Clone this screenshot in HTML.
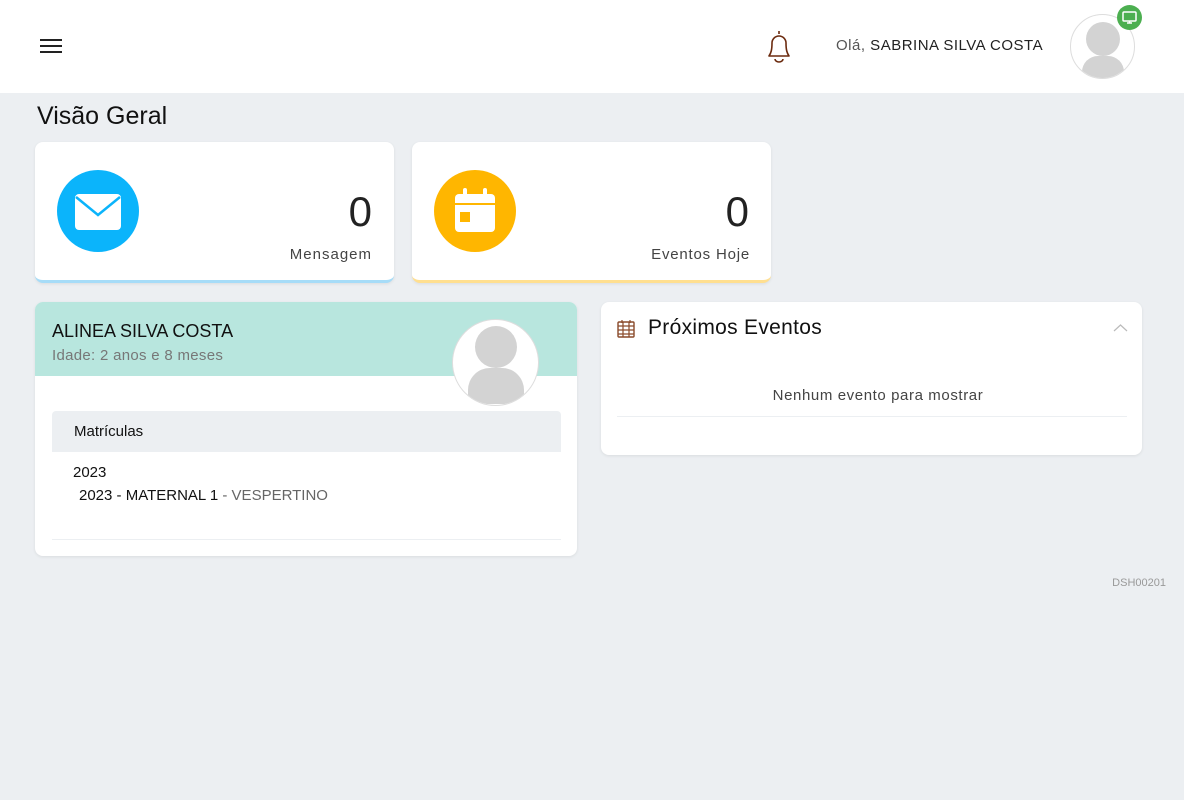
<!DOCTYPE html>
<html><head><meta charset="utf-8"><style>
*{margin:0;padding:0;box-sizing:border-box}
body{width:1184px;height:800px;background:#eceff2;font-family:"Liberation Sans",sans-serif;color:#111;position:relative;overflow:hidden}
.a{position:absolute}
.card{position:absolute;background:#fff;border-radius:8px;box-shadow:0 1px 3px rgba(0,0,0,.08)}
</style></head><body>
<div class="a" style="left:0;top:0;width:1184px;height:93px;background:#fff"></div>
<div class="a" style="left:40px;top:39px;width:22px;height:2px;background:#222"></div>
<div class="a" style="left:40px;top:45px;width:22px;height:2px;background:#222"></div>
<div class="a" style="left:40px;top:51px;width:22px;height:2px;background:#222"></div>
<svg class="a" style="left:764px;top:29px" width="30" height="36" viewBox="0 0 30 36"><path d="M15 2v3M5 27c2-3 3-6 3-13a7 7 0 0 1 14 0c0 7 1 10 3 13z M11 30a4 3 0 0 0 8 0" fill="none" stroke="#6b2a0e" stroke-width="1.6" stroke-linejoin="round"/></svg>
<div class="a" style="left:836px;top:37px;font-size:15px;color:#222;letter-spacing:0.5px"><span style="color:#555">Olá,</span> SABRINA SILVA COSTA</div>
<div class="a" style="left:1070px;top:14px;width:65px;height:65px;border-radius:50%;border:1px solid #ddd;background:#fff;overflow:hidden">
<div class="a" style="left:15px;top:7px;width:34px;height:34px;border-radius:50%;background:#d3d3d3"></div>
<div class="a" style="left:11px;top:41px;width:42px;height:30px;border-radius:16px 16px 6px 6px;background:#d3d3d3"></div></div>
<div class="a" style="left:1117px;top:5px;width:25px;height:25px;border-radius:50%;background:#4caf50"></div>
<svg class="a" style="left:1121px;top:9px" width="17" height="17" viewBox="0 0 17 17"><rect x="2" y="3" width="13" height="9" rx="1" fill="none" stroke="#fff" stroke-width="1.5"/><path d="M6 14h5M8.5 12v2" stroke="#fff" stroke-width="1.5"/></svg>
<div class="a" style="left:37px;top:102px;font-size:25px;color:#111">Visão Geral</div>

<div class="card" style="left:35px;top:142px;width:359px;height:141px;border-bottom:3px solid #a6dcf8"></div>
<div class="a" style="left:57px;top:170px;width:82px;height:82px;border-radius:50%;background:#0bb4fb"></div>
<svg class="a" style="left:74px;top:193px" width="48" height="38" viewBox="0 0 48 38"><rect x="1" y="1" width="46" height="36" rx="4" fill="#fff"/><path d="M2 4l22 18 22-18" fill="none" stroke="#0bb4fb" stroke-width="2.5"/></svg>
<div class="a" style="left:300px;top:188px;width:72px;text-align:right;font-size:42px;color:#222">0</div>
<div class="a" style="left:230px;top:246px;width:142px;text-align:right;font-size:15px;color:#444;letter-spacing:1px">Mensagem</div>

<div class="card" style="left:412px;top:142px;width:359px;height:141px;border-bottom:3px solid #ffdf90"></div>
<div class="a" style="left:434px;top:170px;width:82px;height:82px;border-radius:50%;background:#ffb600"></div>
<svg class="a" style="left:454px;top:188px" width="42" height="48" viewBox="0 0 42 48"><rect x="1" y="6" width="40" height="38" rx="4" fill="#fff"/><rect x="9" y="0" width="4" height="9" rx="2" fill="#fff"/><rect x="29" y="0" width="4" height="9" rx="2" fill="#fff"/><path d="M1 16h40" stroke="#ffb600" stroke-width="2"/><rect x="6" y="24" width="10" height="10" fill="#ffb600"/></svg>
<div class="a" style="left:677px;top:188px;width:72px;text-align:right;font-size:42px;color:#222">0</div>
<div class="a" style="left:580px;top:246px;width:170px;text-align:right;font-size:15px;color:#444;letter-spacing:0.8px">Eventos Hoje</div>

<div class="card" style="left:35px;top:302px;width:542px;height:254px;overflow:hidden">
<div class="a" style="left:0;top:0;width:542px;height:74px;background:#b8e6de"></div>
<div class="a" style="left:17px;top:19px;font-size:18px;color:#111">ALINEA SILVA COSTA</div>
<div class="a" style="left:17px;top:45px;font-size:15px;color:#777;letter-spacing:0.3px">Idade: 2 anos e 8 meses</div>
<div class="a" style="left:417px;top:17px;width:87px;height:87px;border-radius:50%;border:1px solid #ddd;background:#fff;overflow:hidden">
<div class="a" style="left:22px;top:6px;width:42px;height:42px;border-radius:50%;background:#d3d3d3"></div>
<div class="a" style="left:15px;top:48px;width:56px;height:36px;border-radius:22px 22px 8px 8px;background:#d3d3d3"></div></div>
<div class="a" style="left:17px;top:109px;width:509px;height:41px;background:#eceff2;border-radius:4px 4px 0 0"></div>
<div class="a" style="left:39px;top:121px;font-size:15px">Matrículas</div>
<div class="a" style="left:38px;top:162px;font-size:15px">2023</div>
<div class="a" style="left:44px;top:185px;font-size:15px">2023 - MATERNAL 1 <span style="color:#666">- VESPERTINO</span></div>
<div class="a" style="left:17px;top:237px;width:509px;height:1px;background:#eceff2"></div>
</div>

<div class="card" style="left:601px;top:302px;width:541px;height:153px">
<svg class="a" style="left:16px;top:17px" width="18" height="19" viewBox="0 0 18 19"><rect x="1" y="3" width="16" height="15" rx="1" fill="none" stroke="#8a4a2a" stroke-width="1.4"/><path d="M1 7h16M1 11h16M1 15h16M6 3v15M12 3v15M5 1v3M13 1v3" stroke="#8a4a2a" stroke-width="1.2"/></svg>
<div class="a" style="left:47px;top:14px;font-size:21px;color:#111;letter-spacing:0.3px">Próximos Eventos</div>
<svg class="a" style="left:512px;top:21px" width="15" height="9" viewBox="0 0 15 9"><path d="M1 8l6.5-6 6.5 6" fill="none" stroke="#bbb" stroke-width="1.2"/></svg>
<div class="a" style="left:0;top:85px;width:554px;text-align:center;font-size:15px;color:#444;letter-spacing:0.6px">Nenhum evento para mostrar</div>
<div class="a" style="left:16px;top:114px;width:510px;height:1px;background:#eceff2"></div>
</div>
<div class="a" style="left:1066px;top:577px;width:100px;text-align:right;font-size:11px;color:#999">DSH00201</div>
</body></html>
